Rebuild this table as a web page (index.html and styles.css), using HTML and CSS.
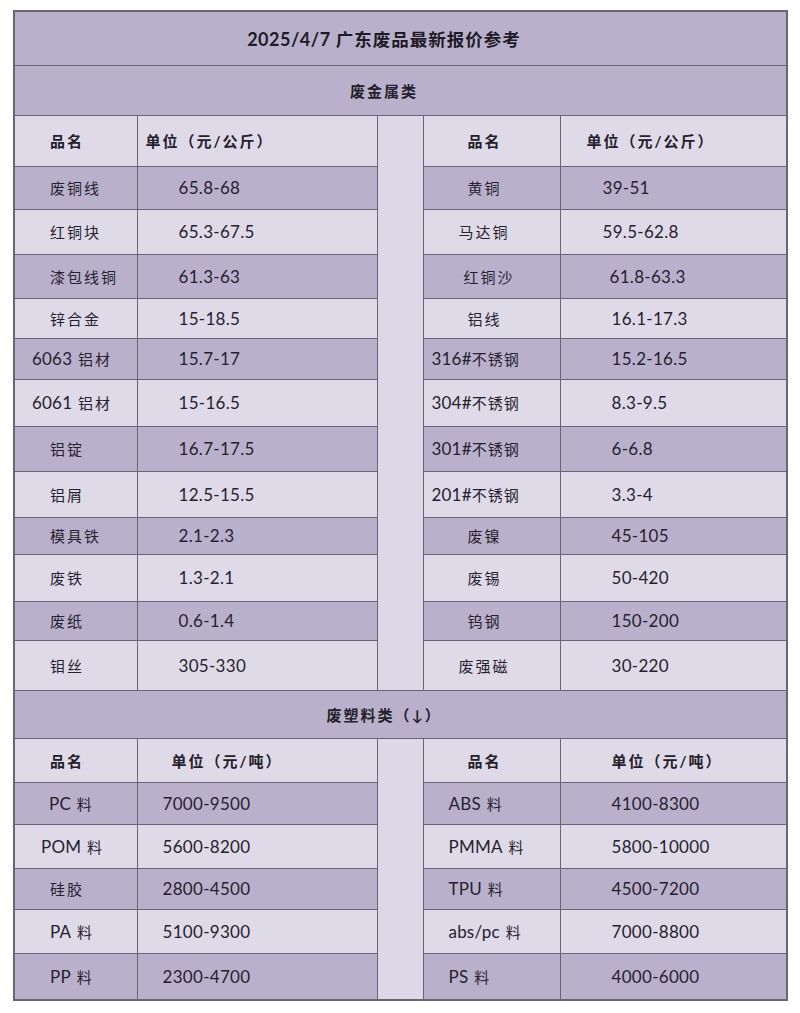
FILE: index.html
```html
<!DOCTYPE html>
<html lang="zh-CN">
<head>
<meta charset="utf-8">
<title>2025/4/7 广东废品最新报价参考</title>
<link rel="stylesheet" href="styles.css">
</head>
<body>
<table class="sheet">
  <colgroup>
    <col class="c-name"><col class="c-unit"><col class="c-gap"><col class="c-name2"><col class="c-unit2">
  </colgroup>
  <tbody>
    <tr class="h54 dark"><td colspan="5" class="title"><span class="lat">2025/4/7</span> 广东废品最新报价参考</td></tr>
    <tr class="h50 dark"><td colspan="5" class="section">废金属类</td></tr>
    <tr class="h51 light head">
      <td class="nm">品名</td><td class="u-mh">单位（元/公斤）</td>
      <td class="gap" rowspan="13"></td>
      <td class="rn">品名</td><td class="ru-mh">单位（元/公斤）</td>
    </tr>
    <tr class="h43 dark"><td class="nm">废铜线</td><td class="u-m num">65.8-68</td><td class="rn">黄铜</td><td class="ru-a num">39-51</td></tr>
    <tr class="h45 light"><td class="nm">红铜块</td><td class="u-m num">65.3-67.5</td><td class="rn rn3">马达铜</td><td class="ru-a num">59.5-62.8</td></tr>
    <tr class="h44 dark"><td class="nm">漆包线铜</td><td class="u-m num">61.3-63</td><td class="rn rn-s">红铜沙</td><td class="ru-b num">61.8-63.3</td></tr>
    <tr class="h40 light"><td class="nm">锌合金</td><td class="u-m num">15-18.5</td><td class="rn">铝线</td><td class="ru num">16.1-17.3</td></tr>
    <tr class="h41 dark"><td class="nm nm-w"><span class="lat">6063</span> 铝材</td><td class="u-m num">15.7-17</td><td class="rn rn-l"><span class="lat">316#</span>不锈钢</td><td class="ru num">15.2-16.5</td></tr>
    <tr class="h47 light"><td class="nm nm-w"><span class="lat">6061</span> 铝材</td><td class="u-m num">15-16.5</td><td class="rn rn-l"><span class="lat">304#</span>不锈钢</td><td class="ru num">8.3-9.5</td></tr>
    <tr class="h45 dark"><td class="nm">铝锭</td><td class="u-m num">16.7-17.5</td><td class="rn rn-l"><span class="lat">301#</span>不锈钢</td><td class="ru num">6-6.8</td></tr>
    <tr class="h46 light"><td class="nm">铝屑</td><td class="u-m num">12.5-15.5</td><td class="rn rn-l"><span class="lat">201#</span>不锈钢</td><td class="ru num">3.3-4</td></tr>
    <tr class="h37 dark"><td class="nm">模具铁</td><td class="u-m num">2.1-2.3</td><td class="rn">废镍</td><td class="ru num">45-105</td></tr>
    <tr class="h47 light"><td class="nm">废铁</td><td class="u-m num">1.3-2.1</td><td class="rn">废锡</td><td class="ru num">50-420</td></tr>
    <tr class="h39 dark"><td class="nm">废纸</td><td class="u-m num">0.6-1.4</td><td class="rn">钨钢</td><td class="ru num">150-200</td></tr>
    <tr class="h50 light"><td class="nm">钼丝</td><td class="u-m num">305-330</td><td class="rn rn3">废强磁</td><td class="ru num">30-220</td></tr>
    <tr class="h48 dark"><td colspan="5" class="section">废塑料类（↓）</td></tr>
    <tr class="h44 light head">
      <td class="nm">品名</td><td class="u-ph">单位（元/吨）</td>
      <td class="gap" rowspan="6"></td>
      <td class="rn">品名</td><td class="ru">单位（元/吨）</td>
    </tr>
    <tr class="h42 dark"><td class="nm nm-pc"><span class="lat">PC</span> 料</td><td class="u-p num">7000-9500</td><td class="rn rn-p"><span class="lat">ABS</span> 料</td><td class="ru num">4100-8300</td></tr>
    <tr class="h44 light"><td class="nm nm-pom"><span class="lat">POM</span> 料</td><td class="u-p num">5600-8200</td><td class="rn rn-p"><span class="lat">PMMA</span> 料</td><td class="ru num">5800-10000</td></tr>
    <tr class="h41 dark"><td class="nm">硅胶</td><td class="u-p num">2800-4500</td><td class="rn rn-p"><span class="lat">TPU</span> 料</td><td class="ru num">4500-7200</td></tr>
    <tr class="h44 light"><td class="nm"><span class="lat">PA</span> 料</td><td class="u-p num">5100-9300</td><td class="rn rn-p"><span class="lat">abs/pc</span> 料</td><td class="ru num">7000-8800</td></tr>
    <tr class="h47 dark"><td class="nm"><span class="lat">PP</span> 料</td><td class="u-p num">2300-4700</td><td class="rn rn-p"><span class="lat">PS</span> 料</td><td class="ru num">4000-6000</td></tr>
  </tbody>
</table>
</body>
</html>
```

FILE: styles.css
```css
html, body {
  margin: 0;
  padding: 0;
  background: #ffffff;
}

body {
  padding: 10px 0 0 13px;
  font-family: "Lato", "Noto Sans CJK SC", sans-serif;
  color: #26222d;
}

.sheet {
  border-collapse: collapse;
  table-layout: fixed;
  width: 775px;
  border: 2px solid #6a6575;
}

.c-name { width: 123px; }
.c-unit { width: 240px; }
.c-gap { width: 46px; }
.c-name2 { width: 137px; }
.c-unit2 { width: 227px; }

.sheet td {
  border: 1.5px solid #6a6575;
  padding: 0;
  vertical-align: middle;
  white-space: nowrap;
  font-size: 15px;
  letter-spacing: 2px;
  text-align: left;
}

.dark td { background: #b9b1cc; }
.light td { background: #dfdae8; }
.sheet td.gap { background: #ddd7e7; }

.h37 { height: 37px; }
.h39 { height: 39px; }
.h40 { height: 40px; }
.h41 { height: 41px; }
.h42 { height: 42px; }
.h43 { height: 43px; }
.h44 { height: 44px; }
.h45 { height: 45px; }
.h46 { height: 46px; }
.h47 { height: 47px; }
.h48 { height: 48px; }
.h50 { height: 50px; }
.h51 { height: 51px; }
.h54 { height: 54px; }

.lat {
  font-size: 17px;
  letter-spacing: 0.2px;
}

.sheet td.title {
  text-align: center;
  padding-right: 33px;
  font-size: 17.5px;
  font-weight: 700;
  letter-spacing: 1px;
  color: #1f1c25;
}

.title .lat {
  font-size: 18px;
  letter-spacing: 0.5px;
}

.sheet td.section {
  text-align: center;
  padding-right: 33px;
  font-size: 15px;
  font-weight: 700;
  letter-spacing: 2px;
  color: #24212a;
}

.head td { font-weight: 700; color: #24212a; }

.sheet td.num {
  font-size: 17px;
  letter-spacing: 0.3px;
}

.sheet td.nm { padding-left: 35px; }
.sheet td.nm-w { padding-left: 17px; }
.sheet td.nm-pc { padding-left: 34px; }
.sheet td.nm-pom { padding-left: 26px; }

.sheet td.u-mh { padding-left: 8px; }
.sheet td.u-m { padding-left: 41px; }
.sheet td.u-ph { padding-left: 34px; }
.sheet td.u-p { padding-left: 25px; }

.sheet td.rn { padding-left: 44px; }
.sheet td.rn3 { padding-left: 35px; }
.sheet td.rn-s { padding-left: 40px; }
.sheet td.rn-l { padding-left: 8px; letter-spacing: 1px; }
.sheet td.rn-p { padding-left: 25px; }

.sheet td.ru-mh { padding-left: 26px; }
.sheet td.ru-a { padding-left: 42px; }
.sheet td.ru-b { padding-left: 49px; }
.sheet td.ru { padding-left: 51px; }
```
